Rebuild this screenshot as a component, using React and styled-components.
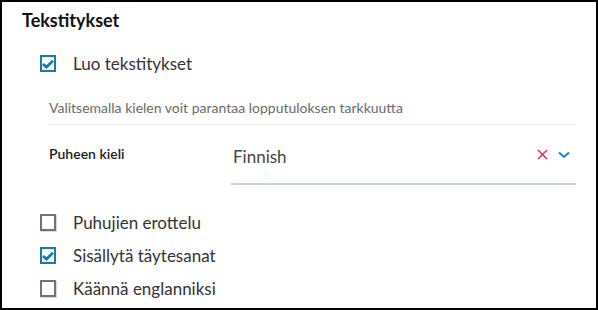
import React from 'react';
import styled, { createGlobalStyle } from 'styled-components';

const Global = createGlobalStyle`
  html, body {
    margin: 0;
    padding: 0;
    background: #fff;
  }
  body {
    font-family: Lato, 'Open Sans', sans-serif;
    color: #222;
  }
`;

const Frame = styled.div`
  box-sizing: border-box;
  width: 598px;
  height: 310px;
  border: 2px solid #000;
  padding: 6px 20px 0 20px;
  overflow: hidden;
`;

const Title = styled.h2`
  margin: 0 0 15px 0;
  font-size: 18px;
  font-weight: 700;
  line-height: 24px;
  color: #111;
`;

const CheckRow = styled.label`
  display: flex;
  align-items: center;
  gap: 17px;
  height: 33px;
  padding-left: 18px;
  font-size: 17px;
  color: #333;
  cursor: pointer;
`;

const Box = styled.span`
  box-sizing: border-box;
  width: 16px;
  height: 17px;
  border: 2px solid ${(p) => (p.checked ? '#1a78ad' : '#7c6e72')};
  box-shadow: ${(p) => (p.checked ? 'none' : '1px 1px 1px rgba(0,0,0,0.15)')};
  display: flex;
  align-items: center;
  justify-content: center;
  background: #fff;
`;

const Section = styled.div`
  margin-left: 27px;
`;

const Help = styled.p`
  margin: 0;
  padding: 19px 0 8px 0;
  font-size: 14px;
  line-height: 17px;
  color: #6a6a6a;
  border-bottom: 1px solid #ececec;
`;

const Field = styled.div`
  display: grid;
  grid-template-columns: 182px 1fr;
  align-items: start;
  padding-top: 15px;
  margin-bottom: 21px;
`;

const FieldLabel = styled.div`
  font-size: 14px;
  font-weight: 600;
  color: #1a1a1a;
  line-height: 28px;
`;

const Select = styled.div`
  display: flex;
  align-items: center;
  height: 45px;
  padding: 0 6px 0 2px;
  border-bottom: 2px solid #c9d5db;
  box-sizing: border-box;
`;

const Value = styled.div`
  flex: 1;
  font-size: 17px;
  color: #444;
  padding-bottom: 11px;
`;

const Icons = styled.div`
  display: flex;
  align-items: center;
  gap: 10px;
  padding-bottom: 14px;
`;

const List = styled.div`
  display: flex;
  flex-direction: column;
`;

function Check({ checked }) {
  return (
    <Box checked={checked}>
      {checked && (
        <svg width='12' height='10' viewBox='0 0 12 10'>
          <path d='M1 5 L4.4 8 L11 1.8' fill='none' stroke='#1a78ad' strokeWidth='2.8' />
        </svg>
      )}
    </Box>
  );
}

function Option({ checked, children }) {
  return (
    <CheckRow>
      <Check checked={checked} />
      <span>{children}</span>
    </CheckRow>
  );
}

export default function App() {
  return (
    <Frame>
      <Global />
      <Title>Tekstitykset</Title>
      <Option checked>Luo tekstitykset</Option>
      <Section>
        <Help>Valitsemalla kielen voit parantaa lopputuloksen tarkkuutta</Help>
        <Field>
          <FieldLabel>Puheen kieli</FieldLabel>
          <Select>
            <Value>Finnish</Value>
            <Icons>
              <svg width='11' height='11' viewBox='0 0 11 11'>
                <path d='M1 1 L10 10 M10 1 L1 10' stroke='#e8196b' strokeWidth='1.4' />
              </svg>
              <svg width='12' height='8' viewBox='0 0 12 8'>
                <path d='M1 1.5 L6 6 L11 1.5' fill='none' stroke='#1b86cf' strokeWidth='2' />
              </svg>
            </Icons>
          </Select>
        </Field>
      </Section>
      <List>
        <Option>Puhujien erottelu</Option>
        <Option checked>Sisällytä täytesanat</Option>
        <Option>Käännä englanniksi</Option>
      </List>
    </Frame>
  );
}
